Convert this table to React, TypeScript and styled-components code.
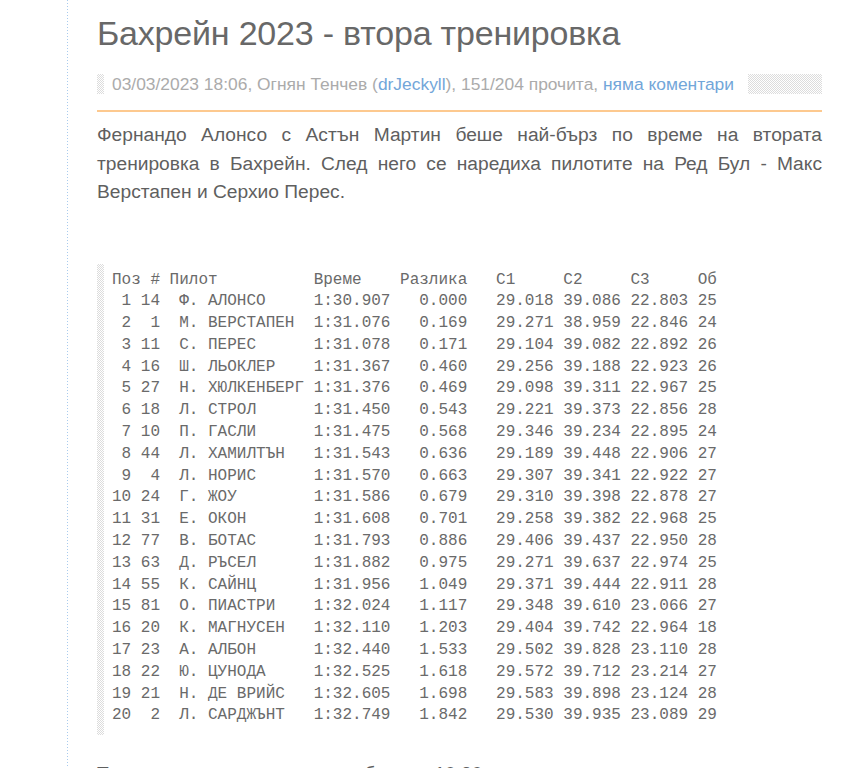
import React from "react";
import styled, { createGlobalStyle } from "styled-components";

const GlobalStyle = createGlobalStyle`
  html, body {
    margin: 0;
    padding: 0;
    background: #ffffff;
  }
  body {
    font-family: "Liberation Sans", Arial, sans-serif;
    color: #666666;
  }
`;

const Page = styled.div`
  padding-left: 67px;
  min-height: 768px;
`;

const Column = styled.main`
  width: 725px;
  min-height: 768px;
  padding: 13px 0 0 30px;
  background: repeating-linear-gradient(
      to bottom,
      #a9cbee 0 1px,
      transparent 1px 3px
    )
    left top / 1px 100% no-repeat;
`;

const Header = styled.header`
  border-bottom: 2px solid #fdc98f;
  padding-bottom: 16px;
`;

const Title = styled.h1`
  margin: 0 0 20px 0;
  font-family: "Liberation Sans", Arial, sans-serif;
  font-weight: normal;
  font-size: 34px;
  line-height: 41px;
  color: #686868;
  letter-spacing: -0.2px;
`;

const dots = `repeating-conic-gradient(#dcdcdc 0 25%, #ffffff 0 50%) 0 0 / 2px 2px`;

const Meta = styled.div`
  display: flex;
  height: 20px;
  padding-left: 7px;
  background: ${dots};
`;

const MetaText = styled.span`
  background: #ffffff;
  padding: 0 14px 0 8px;
  font-size: 17.4px;
  line-height: 20px;
  color: #ababab;
  white-space: nowrap;
`;

const Link = styled.a`
  color: #72a6d9;
  text-decoration: none;
`;

const Lead = styled.p`
  margin: 9px 0 0 0;
  font-size: 19.2px;
  line-height: 28.5px;
  text-align: justify;
  color: #5f5f5f;
`;

const Results = styled.pre`
  margin: 57px 0 0 0;
  padding: 6px 0 8px 15px;
  font-family: "Liberation Mono", "DejaVu Sans Mono", monospace;
  font-size: 16px;
  line-height: 21.8px;
  color: #6a6a6a;
  background: linear-gradient(to right, transparent 0 7px, #ffffff 7px),
    ${dots};
`;

const Closing = styled.p`
  margin: 25px 0 0 0;
  font-size: 19.2px;
  line-height: 28.5px;
  color: #5f5f5f;
`;

type Row = [number, number, string, string, string, string, string, string, number];

const rows: Row[] = [
  [1, 14, "Ф. АЛОНСО", "1:30.907", "0.000", "29.018", "39.086", "22.803", 25],
  [2, 1, "М. ВЕРСТАПЕН", "1:31.076", "0.169", "29.271", "38.959", "22.846", 24],
  [3, 11, "С. ПЕРЕС", "1:31.078", "0.171", "29.104", "39.082", "22.892", 26],
  [4, 16, "Ш. ЛЬОКЛЕР", "1:31.367", "0.460", "29.256", "39.188", "22.923", 26],
  [5, 27, "Н. ХЮЛКЕНБЕРГ", "1:31.376", "0.469", "29.098", "39.311", "22.967", 25],
  [6, 18, "Л. СТРОЛ", "1:31.450", "0.543", "29.221", "39.373", "22.856", 28],
  [7, 10, "П. ГАСЛИ", "1:31.475", "0.568", "29.346", "39.234", "22.895", 24],
  [8, 44, "Л. ХАМИЛТЪН", "1:31.543", "0.636", "29.189", "39.448", "22.906", 27],
  [9, 4, "Л. НОРИС", "1:31.570", "0.663", "29.307", "39.341", "22.922", 27],
  [10, 24, "Г. ЖОУ", "1:31.586", "0.679", "29.310", "39.398", "22.878", 27],
  [11, 31, "Е. ОКОН", "1:31.608", "0.701", "29.258", "39.382", "22.968", 25],
  [12, 77, "В. БОТАС", "1:31.793", "0.886", "29.406", "39.437", "22.950", 28],
  [13, 63, "Д. РЪСЕЛ", "1:31.882", "0.975", "29.271", "39.637", "22.974", 25],
  [14, 55, "К. САЙНЦ", "1:31.956", "1.049", "29.371", "39.444", "22.911", 28],
  [15, 81, "О. ПИАСТРИ", "1:32.024", "1.117", "29.348", "39.610", "23.066", 27],
  [16, 20, "К. МАГНУСЕН", "1:32.110", "1.203", "29.404", "39.742", "22.964", 18],
  [17, 23, "А. АЛБОН", "1:32.440", "1.533", "29.502", "39.828", "23.110", 28],
  [18, 22, "Ю. ЦУНОДА", "1:32.525", "1.618", "29.572", "39.712", "23.214", 27],
  [19, 21, "Н. ДЕ ВРИЙС", "1:32.605", "1.698", "29.583", "39.898", "23.124", 28],
  [20, 2, "Л. САРДЖЪНТ", "1:32.749", "1.842", "29.530", "39.935", "23.089", 29],
];

const header =
  "Поз # Пилот          Време    Разлика   С1     С2     С3     Об";

const formatRow = (r: Row) => {
  const [pos, num, name, time, gap, s1, s2, s3, laps] = r;
  return (
    String(pos).padStart(2, " ") +
    " " +
    String(num).padStart(2, " ") +
    "  " +
    name.padEnd(14, " ") +
    time +
    "   " +
    gap +
    "   " +
    s1 +
    " " +
    s2 +
    " " +
    s3 +
    " " +
    String(laps)
  );
};

const table = [header, ...rows.map(formatRow)].join("\n");

export default function App() {
  return (
    <>
      <GlobalStyle />
      <Page>
        <Column>
          <Header>
            <Title>Бахрейн 2023 - втора тренировка</Title>
            <Meta>
              <MetaText>
                03/03/2023 18:06, Огнян Тенчев (<Link href="#">drJeckyll</Link>),
                151/204 прочита, <Link href="#">няма коментари</Link>
              </MetaText>
            </Meta>
          </Header>
          <Lead>
            Фернандо Алонсо с Астън Мартин беше най-бърз по време на втората
            тренировка в Бахрейн. След него се наредиха пилотите на Ред Бул -
            Макс Верстапен и Серхио Перес.
          </Lead>
          <Results>{table}</Results>
          <Closing>Третата тренировка ще е в събота от 10:30</Closing>
        </Column>
      </Page>
    </>
  );
}
